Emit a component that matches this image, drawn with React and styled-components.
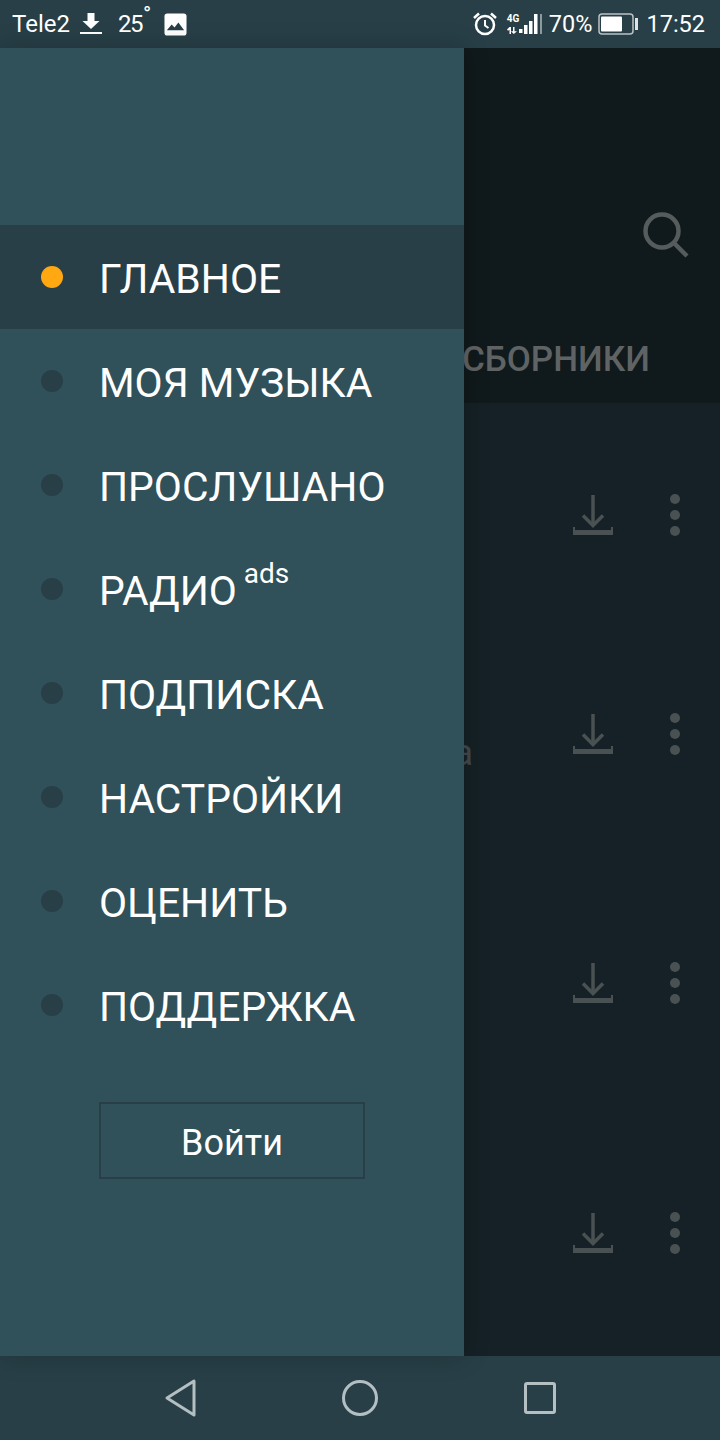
import React from "react"
import styled, { createGlobalStyle } from "styled-components"

const GlobalStyle = createGlobalStyle`
  html, body {
    margin: 0;
    padding: 0;
    background: #283f47;
  }
  * {
    box-sizing: border-box;
  }
`

const menuItems = [
  { label: "ГЛАВНОЕ", active: true },
  { label: "МОЯ МУЗЫКА" },
  { label: "ПРОСЛУШАНО" },
  { label: "РАДИО", badge: "ads" },
  { label: "ПОДПИСКА" },
  { label: "НАСТРОЙКИ" },
  { label: "ОЦЕНИТЬ" },
  { label: "ПОДДЕРЖКА" },
]

const tracks = [
  { gap: 92 },
  { gap: 179, title: "a" },
  { gap: 209 },
  { gap: 210 },
]

const DownloadIcon = () => (
  <svg width="40" height="40" viewBox="0 0 40 40" fill="none" stroke="#4a5152">
    <path d="M20 0v30" strokeWidth="3.500" />
    <path d="M10 20.500l10 10 10-10" strokeWidth="3.500" />
    <path d="M0 37.500h40" strokeWidth="5" />
    <path d="M1 32v4M39 32v4" strokeWidth="2" />
  </svg>
)

const SearchIcon = () => (
  <svg width="46" height="46" viewBox="0 0 46 46" fill="none" stroke="#565b5c" strokeWidth="4.500">
    <circle cx="19" cy="19" r="16.500" />
    <path d="M30 30l14 14" />
  </svg>
)

const Page = () => (
  <Screen>
    <GlobalStyle />
    <StatusBar>
      <StatusGroup>
        <StatusText>Tele2</StatusText>
        <svg width="22" height="24" viewBox="0 0 22 24" fill="#fff" style={{ marginLeft: 10 }}>
          <path d="M7.500 1h7v8h5L11 17 2.500 9h5z" />
          <rect x="0" y="20" width="22" height="2" />
        </svg>
        <Temperature>25</Temperature>
        <Degree>°</Degree>
        <svg width="23" height="23" viewBox="0 0 24 24" style={{ marginLeft: 13 }}>
          <rect x="0.500" y="0.500" width="23" height="23" rx="3" fill="#fff" />
          <path d="M3 18l5-6 3 3 4-5 6 8z" fill="#283f47" />
        </svg>
      </StatusGroup>
      <StatusGroup>
        <svg width="26" height="26" viewBox="0 0 26 26" fill="none" stroke="#fff" strokeWidth="2.500">
          <circle cx="13" cy="14" r="9" />
          <path d="M13 9v5.500l3.500 2.500" strokeWidth="2" />
          <path d="M2 7l5-4.500M24 7l-5-4.500" />
        </svg>
        <NetworkBlock>
          <NetworkLabel>4G</NetworkLabel>
          <svg width="12" height="7" viewBox="0 0 12 7" fill="#fff">
            <path d="M0 2.500L2.500 0h1.500v7H2.500V2.700L1 3.800zM6 0h1.500v4.300H10L6.800 7 4 4.300h2z" />
          </svg>
        </NetworkBlock>
        <svg width="23" height="22" viewBox="0 0 23 22">
          <rect x="0" y="16" width="3.500" height="4" fill="#fff" />
          <rect x="5" y="12" width="3.500" height="9" fill="#fff" />
          <rect x="10" y="8" width="3.500" height="13" fill="#fff" />
          <rect x="15" y="1" width="3.500" height="20" fill="#fff" />
          <rect x="21" y="1" width="2" height="20" fill="#8b9a9f" />
        </svg>
        <StatusText $left={7} $size={23.5}>70%</StatusText>
        <svg width="41" height="22" viewBox="0 0 41 22" style={{ marginLeft: 6 }}>
          <rect x="1" y="1" width="34" height="20" rx="3" fill="none" stroke="#b9c2c5" strokeWidth="1.500" />
          <rect x="3" y="3.500" width="21" height="15" rx="1" fill="#fff" />
          <rect x="37" y="5" width="3" height="12" fill="#dfe3e5" />
        </svg>
        <StatusText $left={7} $size={23.5}>17:52</StatusText>
      </StatusGroup>
    </StatusBar>

    <Content>
      <Backdrop>
        <AppHeader>
          <SearchRow>
            <SearchIcon />
          </SearchRow>
          <Tabs>
            <Tab>СБОРНИКИ</Tab>
          </Tabs>
        </AppHeader>
        <TrackList>
          {tracks.map((track, i) => (
            <Track key={i} $gap={track.gap}>
              <TrackTitle>{track.title}</TrackTitle>
              <DownloadIcon />
              <MoreDots>
                <i />
                <i />
                <i />
              </MoreDots>
            </Track>
          ))}
        </TrackList>
      </Backdrop>

      <Drawer>
        <Menu>
          {menuItems.map((item) => (
            <MenuItem key={item.label} $active={item.active}>
              <Dot $active={item.active} />
              <MenuLabel>
                {item.label}
                {item.badge && <Badge>{item.badge}</Badge>}
              </MenuLabel>
            </MenuItem>
          ))}
        </Menu>
        <LoginButton>Войти</LoginButton>
      </Drawer>
    </Content>

    <NavBar>
      <svg width="31" height="38" viewBox="0 0 31 38" fill="none" stroke="#b4bfc2" strokeWidth="3" strokeLinejoin="round">
        <path d="M29 2v34L2 19z" />
      </svg>
      <svg width="36" height="36" viewBox="0 0 36 36" fill="none" stroke="#b4bfc2" strokeWidth="3">
        <circle cx="18" cy="18" r="16.500" />
      </svg>
      <svg width="32" height="32" viewBox="0 0 32 32" fill="none" stroke="#b4bfc2" strokeWidth="3" strokeLinejoin="round">
        <rect x="1.500" y="1.500" width="29" height="29" rx="1.500" />
      </svg>
    </NavBar>
  </Screen>
)

const Screen = styled.div`
  width: 720px;
  height: 1440px;
  display: flex;
  flex-direction: column;
  overflow: hidden;
  font-family: Roboto, "Noto Sans", sans-serif;
  background: #283f47;
`

const StatusBar = styled.header`
  height: 48px;
  flex: none;
  display: flex;
  align-items: center;
  justify-content: space-between;
  padding: 0 15px 0 12px;
  background: #283f47;
`

const StatusGroup = styled.div`
  display: flex;
  align-items: center;
`

const StatusText = styled.span`
  margin-left: ${(p) => p.$left || 0}px;
  font-size: ${(p) => p.$size || 24}px;
  line-height: 48px;
  color: #fff;
`

const Temperature = styled(StatusText)`
  margin-left: 16px;
  letter-spacing: -1.5px;
`

const Degree = styled.span`
  align-self: flex-start;
  margin-left: 1px;
  font-size: 22px;
  line-height: 30px;
  color: #fff;
`

const NetworkBlock = styled.div`
  display: flex;
  flex-direction: column;
  align-items: flex-start;
  gap: 3px;
  width: 12px;
  margin-left: 9px;
`

const NetworkLabel = styled.span`
  font-size: 10px;
  font-weight: 700;
  line-height: 10px;
  color: #fff;
`

const Content = styled.main`
  position: relative;
  flex: 1;
  min-height: 0;
`

const Backdrop = styled.div`
  height: 100%;
  display: flex;
  flex-direction: column;
  background: #152126;
`

const AppHeader = styled.div`
  height: 355px;
  flex: none;
  display: flex;
  flex-direction: column;
  background: #10191b;
`

const SearchRow = styled.div`
  display: flex;
  justify-content: flex-end;
  padding: 164px 31px 0 0;
`

const Tabs = styled.div`
  display: flex;
  justify-content: flex-end;
  padding: 82px 70px 0 0;
`

const Tab = styled.span`
  font-size: 35px;
  font-weight: 500;
  line-height: 40px;
  color: #5f6364;
`

const TrackList = styled.div`
  display: flex;
  flex-direction: column;
`

const Track = styled.div`
  height: 40px;
  margin-top: ${(p) => p.$gap}px;
  display: flex;
  align-items: center;
`

const TrackTitle = styled.div`
  width: 473px;
  height: 40px;
  margin-right: 100px;
  padding-top: 18px;
  text-align: right;
  font-size: 36px;
  line-height: 42px;
  color: #43494b;
`

const MoreDots = styled.div`
  display: flex;
  flex-direction: column;
  gap: 6px;
  margin-left: 57px;

  i {
    display: block;
    width: 10px;
    height: 10px;
    border-radius: 50%;
    background: #4a5152;
  }
`

const Drawer = styled.nav`
  position: absolute;
  top: 0;
  left: 0;
  bottom: 0;
  width: 464px;
  padding-top: 177px;
  background: #30505a;
  box-shadow: 0 0 24px rgba(0, 0, 0, 0.22);
`

const Menu = styled.ul`
  margin: 0;
  padding: 0;
  list-style: none;
`

const MenuItem = styled.li`
  height: 104px;
  display: flex;
  align-items: center;
  padding-left: 41px;
  background: ${(p) => (p.$active ? "#283f47" : "transparent")};
`

const Dot = styled.span`
  width: 22px;
  height: 22px;
  flex: none;
  margin-right: 36px;
  border-radius: 50%;
  background: ${(p) => (p.$active ? "#ffa812" : "#283f47")};
`

const MenuLabel = styled.span`
  position: relative;
  margin-top: 3px;
  font-size: 40.800px;
  line-height: 46px;
  color: #fff;
`

const Badge = styled.sup`
  position: absolute;
  top: -9px;
  left: calc(100% + 7px);
  font-size: 28px;
  line-height: 30px;
  vertical-align: baseline;
`

const LoginButton = styled.button`
  display: block;
  width: 266px;
  height: 77px;
  margin: 45px 0 0 99px;
  padding: 5px 0 0;
  border: 2px solid #283f47;
  border-radius: 0;
  background: transparent;
  font-family: inherit;
  font-size: 36px;
  color: #fff;
`

const NavBar = styled.footer`
  height: 84px;
  flex: none;
  display: flex;
  align-items: center;
  justify-content: center;
  gap: 146px;
  background: #283f47;
`

export default Page
